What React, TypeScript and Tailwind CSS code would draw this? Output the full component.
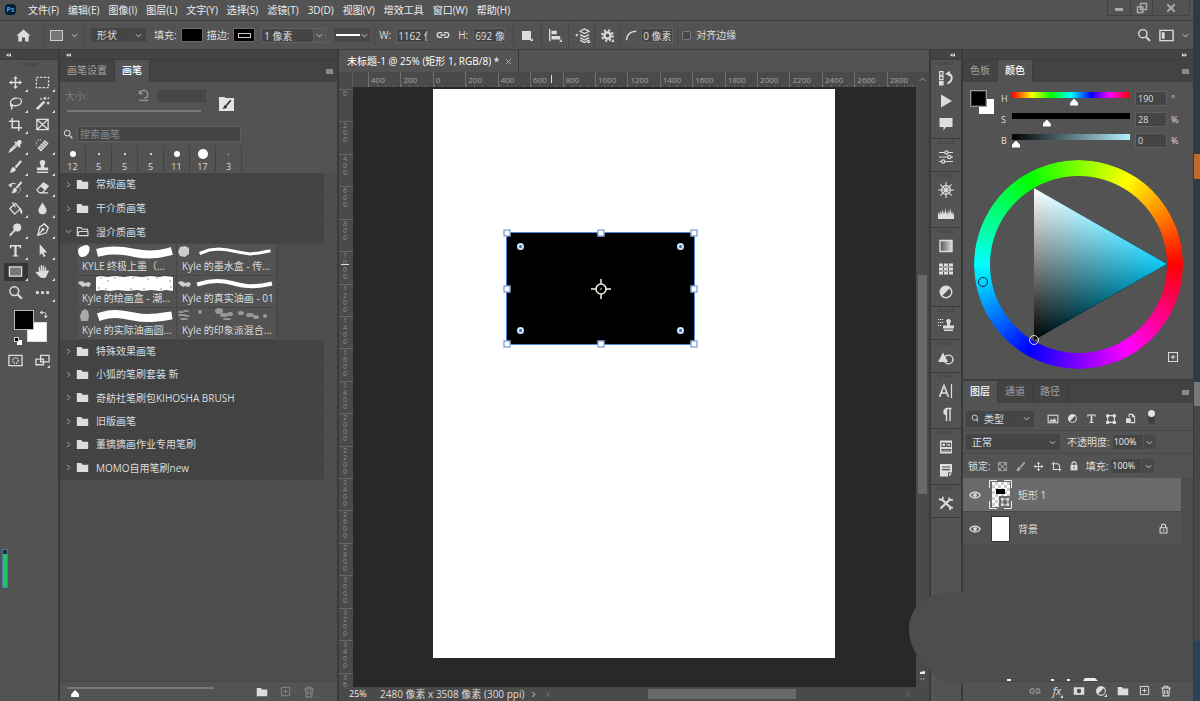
import { useState } from "react"
import type { ReactNode } from "react"
import { clsx } from "clsx"

type IconProps = { size?: number; className?: string; children: ReactNode }

function Icon({ size = 16, className, children }: IconProps) {
  return (
    <svg
      width={size}
      height={size}
      viewBox="0 0 16 16"
      fill="none"
      stroke="currentColor"
      strokeWidth="1.4"
      className={clsx("block shrink-0", className)}
      aria-hidden
    >
      {children}
    </svg>
  )
}

const fill = { fill: "currentColor", stroke: "none" }

const ICONS = {
  move: (
    <>
      <path d="M8 3v10M3 8h10" />
      <path {...fill} d="M8 1l2.5 3h-5zM8 15l2.5-3h-5zM1 8l3-2.5v5zM15 8l-3-2.5v5z" />
    </>
  ),
  marquee: <path strokeDasharray="2.5 1.5" d="M1.5 2.5h13v11h-13z" />,
  lasso: (
    <>
      <ellipse cx="8.5" cy="6.3" rx="6" ry="4" transform="rotate(-12 8.5 6.3)" />
      <path d="M4 8.5c-2 .8-1.5 2.8.4 2.4 1.2-.4.6-2-.6-1.7M4 11c.8 1.6.4 2.6-.8 3.4" />
    </>
  ),
  wand: (
    <>
      <path strokeWidth="2.8" d="M2 14l8-8" />
      <path strokeWidth="1.4" d="M10.5 1v3M9 2.500h3M14 6v3M12.500 7.500h3M5.6 2.3l1.600 1.600M15 1.500l-1.500 1.500" />
    </>
  ),
  crop: <path strokeWidth="1.6" d="M4.5 1v10.5H15M1 4.5h10.5V15" />,
  frame: <path d="M2 2.5h12v11H2zM2 2.5l12 11M14 2.5l-12 11" />,
  eyedropper: (
    <>
      <path {...fill} d="M10 3.5c1.5-3 6-1 4.3 2L12.5 8l1 1-1.3 1.3L6.7 4.8 8 3.5l1 1z" />
      <path d="M8.5 6.5l-5.8 6-1 2 2-1 6-5.6" />
    </>
  ),
  heal: (
    <>
      <path strokeWidth="5.4" d="M4.5 12.5l8-8.5" />
      <path stroke="#535353" strokeWidth="1" d="M6 7.5l3 3M7.8 5.6l3 3M4.4 9.2l3 3M9.5 3.8l3 3" />
      <path strokeDasharray="1.2 1" strokeWidth="1" d="M6.5 2.2C3 1 .5 4 1.8 8" />
    </>
  ),
  brush: (
    <>
      <path strokeWidth="2.4" d="M14 2L8 9" />
      <path {...fill} d="M6 8.500l2.200 2c.3 3-2.700 4.500-6.700 4 1.800-1 1.200-2 2-4 .6-1.200 1.500-1.800 2.500-2z" />
    </>
  ),
  stamp: (
    <>
      <path {...fill} d="M8 1a2.900 2.900 0 012.500 4.500C9.600 7 9.600 8 10 9h4v3H2V9h4c.4-1 .4-2-.5-3.500A2.900 2.900 0 018 1z" />
      <path strokeWidth="1.500" d="M2 14.200h12" />
    </>
  ),
  history: (
    <>
      <path strokeWidth="2.2" d="M14.500 2L9 8.500" />
      <path {...fill} d="M7.500 8l2 2c.2 3-2.500 4.500-6 4 1.600-1 1-1.800 1.700-3.700.5-1 1.300-2.100 2.300-2.300z" />
      <path {...fill} d="M0 5.500L4 3v5z" />
      <path strokeWidth="1.200" d="M3 5c2-2 4-1.500 5-.5" />
      <path strokeDasharray="1.500 1" strokeWidth="1" d="M13 8c1 2 0 4-2 5.500" />
    </>
  ),
  eraser: (
    <>
      <path d="M2 10.500L9 3l5 3.500-6 7H4.500z" />
      <path {...fill} d="M5.500 7l5.200 3.700L14 6.500 9 3z" />
      <path d="M6 13.700h8" />
    </>
  ),
  bucket: (
    <>
      <path d="M2 8l6-5.500 5 6-6 5.500zM8 6.500L4.500 1.500" />
      <path {...fill} d="M12.500 7c2 1.500 3.500 4 2.500 6.500-2 .5-2.500-2-2.500-6.500z" />
    </>
  ),
  drop: <path {...fill} d="M8 1.500c2 3.500 4.300 5.500 4.300 8.300a4.300 4.300 0 01-8.600 0C3.700 7 6 5 8 1.500z" />,
  dodge: (
    <>
      <circle {...fill} cx="9.800" cy="5.800" r="4.300" />
      <path strokeWidth="2" d="M7 9l-5 5.500" />
    </>
  ),
  pen: (
    <>
      <path d="M10 2l4 4-2 5.500L3 14.200 5 5.500z" />
      <path d="M3 14l5-5.500M9.500 1.500l5 5" />
      <circle {...fill} cx="8.500" cy="8" r="1.500" />
    </>
  ),
  type: <path {...fill} d="M2 2h12v3.500h-1.200c-.2-1.300-.7-1.700-2-1.700H9.200v8.400c0 .8.4 1 1.800 1.100V14.500H5v-1.200c1.400-.1 1.800-.3 1.800-1.100V3.800H5.200c-1.300 0-1.800.4-2 1.700H2z" />,
  arrow: <path {...fill} d="M5 1l8 9H9.300l2 4.200-2 .8-1.800-4.200L5 13z" />,
  rect: <path d="M1.500 3h13v10h-13z" fill="#777" />,
  hand: <path {...fill} d="M4 8.500V3.600c0-1 1.500-1 1.500 0V7h.6V1.900c0-1 1.600-1 1.600 0V7h.6V2.400c0-1 1.600-1 1.600 0v5h.6V4.200c0-1 1.500-1 1.500 0v3.300l1.700-.8c.9-.3 1.300.6.8 1.200L12 13.500c-.7 1.200-1.800 1.500-3.500 1.500S5.300 14 4.500 13L1 9.700c-.6-.8.4-1.700 1.200-1.200z" />,
  zoom: (
    <>
      <circle cx="6.700" cy="6.500" r="4.700" strokeWidth="1.600" />
      <path strokeWidth="2.200" d="M10.300 10.200l4.500 4.500" />
    </>
  ),
  dots: <path {...fill} d="M1 6.600h3v3H1zM6.500 6.600h3v3h-3zM12 6.600h3v3h-3z" />,
  play: <path {...fill} d="M3 1.500l11 6.500-11 6.500z" />,
  actions: (
    <>
      <path strokeWidth="1.200" d="M1.600 1.600h3.400v3.400H1.600zM1.600 6.300h3.400v3.400H1.600z" />
      <path {...fill} d="M1 11h4.600v4.400H1zM7 3.800L12 1v5.500z" />
      <path strokeWidth="2" d="M10 3.800c5 1 5 7.200-.5 9.700" />
    </>
  ),
  comment: <path {...fill} d="M1.500 2h13v9H8l-2.500 3.500V11h-4z" />,
  sliders: (
    <>
      <path strokeWidth="1.200" d="M1 3.500h6M10 3.500h5M1 8h9M13 8h2M1 12.500h2.500M7 12.500h8" />
      <circle cx="8.500" cy="3.500" r="1.600" strokeWidth="1.200" />
      <circle cx="11.300" cy="8" r="1.600" strokeWidth="1.200" />
      <circle cx="5.200" cy="12.500" r="1.600" strokeWidth="1.200" />
    </>
  ),
  helm: (
    <>
      <circle cx="8" cy="8" r="4.400" />
      <path strokeWidth="1.100" d="M8 0v16M0 8h16M2.300 2.300l11.400 11.400M13.700 2.300L2.300 13.700" />
      <circle {...fill} cx="8" cy="8" r="1.800" />
    </>
  ),
  histogram: <path {...fill} d="M0 14V9l1-2 .5 3L3 5.500l.5 4.500L4.500 4l.7 5L6 6l.8 3L7.500 2.500 8.300 9l.9-3 .7 4L11 4l.7 5.500L12.500 3l.9 6 .8-3 .5 4L16 7.500V14z" />,
  gradient: (
    <>
      <defs>
        <linearGradient id="gradient-icon">
          <stop stopColor="#555" />
          <stop offset="1" stopColor="#ddd" />
        </linearGradient>
      </defs>
      <path fill="url(#gradient-icon)" d="M2 2.500h12v11H2z" />
    </>
  ),
  pattern: (
    <>
      <path {...fill} d="M1 2.500h14v11H1z" />
      <path stroke="#535353" strokeWidth="1" d="M5.500 2v12M10.500 2v12M1 6h14M1 10h14" />
      <path strokeWidth="1" d="M4.500 6h2M9.500 6h2M4.500 10h2M9.500 10h2" />
    </>
  ),
  half: (
    <>
      <circle cx="8" cy="8" r="5.800" />
      <path {...fill} d="M3.800 12.200A5.900 5.900 0 0112.200 3.800z" />
    </>
  ),
  cloneSource: (
    <>
      <path {...fill} d="M10.500 2a2.300 2.300 0 011.800 3.800c-.5 1-.5 2-.3 2.700h4v3H5v-3h4c.2-.7.200-1.700-.3-2.700A2.300 2.300 0 0110.500 2zM6 12.500h9V14H6z" />
      <path strokeWidth="1.200" strokeDasharray="1.200 .8" d="M0 2.500h5.500M0 5.500h5.500M0 8.500h3.500" />
    </>
  ),
  shapes: (
    <>
      <circle cx="10.500" cy="9.500" r="4.400" />
      <path {...fill} d="M5 2.500l5 9.500H0z" />
    </>
  ),
  character: (
    <>
      <path d="M1.500 14L6 2.500 10.500 14M3 10h6" strokeWidth="1.600" />
      <path d="M13.500 1v14" strokeWidth="1.200" />
    </>
  ),
  paragraph: (
    <>
      <path {...fill} d="M8.500 2v7.500a3.800 3.800 0 010-7.500z" />
      <path strokeWidth="1.400" d="M8.500 2.500h5M8.500 2v13M12 2v13" />
    </>
  ),
  library: (
    <>
      <path {...fill} d="M2 1.500h12v13H2z" />
      <path stroke="#535353" strokeWidth="1.200" d="M4 4h3.500v3.500H4zM9 4.300h3.500v3H9zM4 10.500h8.500v1.500H4z" />
    </>
  ),
  note: (
    <>
      <path {...fill} d="M2 2h12v8.500h-4v4H2zM11 11.500h3l-3 3z" />
      <path stroke="#535353" strokeWidth="1.200" d="M4 5h8M4 7.600h8" />
    </>
  ),
  tools: (
    <>
      <path strokeWidth="2.200" d="M4 4.500l8.500 8M2.500 13.500L12 4.500" />
      <path strokeWidth="1.800" d="M1 3.500c1.500 2 4 1.800 4-1.700M14.800 12.800c-2-.8-3.300.3-2.700 2.200M11 2.500c.2 2.300 1.500 3 4 2" />
    </>
  ),
  folder: <path {...fill} d="M1 2.500h5.500l1.500 2h7v9H1z" />,
  openFolder: (
    <>
      <path d="M1.700 12.800V3.200h4.500l1.500 2h6.500v2" />
      <path d="M1.700 13l2-5h11v5z" />
    </>
  ),
  plus: <path strokeWidth="1.400" d="M2 2h12v12H2zM8 5v6M5 8h6" />,
  trash: <path strokeWidth="1.400" d="M1.500 4h13M3.500 4l.7 10.500h7.600L12.500 4M5.500 4V1.700h5V4M6.300 6.500v5.500M9.700 6.500v5.500" />,
  link: <path strokeWidth="1.500" d="M7 10.800H4.200a2.800 2.800 0 010-5.600H7M9 5.200h2.800a2.800 2.800 0 010 5.600H9M5 8h6" />,
  mask: (
    <>
      <path {...fill} d="M1 3h14v10H1z" />
      <circle cx="8" cy="8" r="3" fill="#535353" stroke="none" />
    </>
  ),
  image: (
    <>
      <path d="M1.500 3h13v10h-13z" />
      <path {...fill} d="M3 11.500l2.500-4L7.500 10 10 6.500l3 5z" />
    </>
  ),
  shapeBox: (
    <>
      <path d="M3.500 3.500h9v9h-9z" />
      <path {...fill} d="M1.500 1.500h4v4h-4zM10.500 1.500h4v4h-4zM1.500 10.500h4v4h-4zM10.500 10.500h4v4h-4z" />
    </>
  ),
  smartObject: (
    <>
      <path strokeWidth="1.500" d="M6 6V2h5l3 3v9H8" />
      <path {...fill} d="M1.500 7.500h7v7h-7zM10 1.500L14.500 6H10z" />
    </>
  ),
  checker: (
    <>
      <path d="M2 2h12v12H2z" />
      <path {...fill} d="M2 2h4v4H2zM10 2h4v4h-4zM6 6h4v4H6zM2 10h4v4H2zM10 10h4v4h-4z" />
    </>
  ),
  artboard: <path strokeWidth="1.500" d="M3.500 1v11.500H15M1 4h8.500M12.500 15V6.500L9.500 3.500" />,
  lock: (
    <>
      <path {...fill} d="M2.500 6.500h11V15h-11z" />
      <path strokeWidth="1.800" d="M4.800 7V4.500a3.200 3.200 0 016.400 0V7" />
      <path stroke="#535353" strokeWidth="1.600" d="M8 9v3.500" />
    </>
  ),
  lockOutline: <path strokeWidth="1.500" d="M3 7h10v7.500H3zM5 7V4.500a3 3 0 016 0V7M8 9.500v2.500" />,
  eye: (
    <>
      <path strokeWidth="1.700" d="M1 8c3.500-5.300 10.500-5.300 14 0-3.500 5.300-10.500 5.300-14 0z" />
      <circle {...fill} cx="8" cy="8" r="2.500" />
    </>
  ),
  gear: (
    <>
      <circle cx="8" cy="8" r="3.800" strokeWidth="2.800" />
      <path strokeWidth="2.600" strokeDasharray="2.600 2.505" d="M14.500 8a6.500 6.500 0 11-13 0 6.500 6.500 0 0113 0" />
    </>
  ),
  align: (
    <>
      <path strokeWidth="1.500" d="M2 1v14" />
      <path {...fill} d="M4 3h6v4H4zM4 9h10v4H4z" />
    </>
  ),
  arrange: (
    <>
      <path strokeWidth="1.400" d="M10 1l5 2.500L10 6 5.500 3.500zM5.500 7l4.500 2.500L15 7M5.500 10.300l4.500 2.500 5-2.500M5.500 13l4.500 2.500 5-2.500" />
      <path strokeWidth="1.200" d="M.500 7.500h3M2 6v3" />
    </>
  ),
  home: <path {...fill} d="M8 1.500l7.500 6.800h-2V14.500H9.700V10H6.300v4.500H2.500V8.300h-2z" />,
  reset: <path strokeWidth="1.600" d="M3.500 5.500A5 5 0 1111 11H9M3 1.800v4h4M3 14h11" />,
  swap: (
    <>
      <path strokeWidth="1.600" d="M4.500 4.500h5a2.500 2.500 0 012.500 2.500v4" />
      <path {...fill} d="M1 4.500L6 1v7zM12 15l-3.500-5h7z" />
    </>
  ),
}

type IconName = keyof typeof ICONS

function Chevron({ className }: { className?: string }) {
  return (
    <svg viewBox="0 0 8 8" className={clsx("block h-[7px] w-[7px] shrink-0", className)} fill="none" stroke="currentColor" aria-hidden>
      <path d="M1 2.500L4 5.500 7 2.500" />
    </svg>
  )
}

// small corner mark on buttons that hold a fly-out
function Corner() {
  return (
    <svg viewBox="0 0 4 4" className="absolute right-0 bottom-0 h-[3px] w-[3px]" aria-hidden>
      <path d="M4 0v4H0z" fill="#ddd" />
    </svg>
  )
}

function IconButton({ name, label, size = 14, corner, className }: { name: IconName; label: string; size?: number; corner?: boolean; className?: string }) {
  return (
    <button type="button" aria-label={label} className={clsx("relative flex shrink-0 items-center justify-center", className)}>
      <Icon size={size}>{ICONS[name]}</Icon>
      {corner && <Corner />}
    </button>
  )
}

const MENUS = ["文件(F)", "编辑(E)", "图像(I)", "图层(L)", "文字(Y)", "选择(S)", "滤镜(T)", "3D(D)", "视图(V)", "增效工具", "窗口(W)", "帮助(H)"]

function MenuBar() {
  return (
    <header className="flex h-[21px] shrink-0 items-start border-b border-[#3c3c3c]">
      <span className="mt-1 ml-[5px] flex h-[11px] w-[11px] items-center justify-center rounded-sm bg-[#001e36] text-[7px] font-bold text-[#31a8ff]">Ps</span>
      <nav className="ml-3 flex h-5 items-center gap-[9px]">
        {MENUS.map((item) => (
          <button key={item} type="button" className="whitespace-nowrap text-[#eee]">
            {item}
          </button>
        ))}
      </nav>
      <div className="mr-[3px] ml-auto flex h-4 border border-t-0 border-[#434343] text-[#aaa]">
        <button type="button" aria-label="最小化" className="flex w-[23px] items-center justify-center border-r border-[#434343]">
          <span className="mt-1 h-[3px] w-2 bg-[#aaa]" />
        </button>
        <button type="button" aria-label="还原" className="flex w-[22px] items-center justify-center border-r border-[#434343]">
          <Icon size={12}>
            <path strokeWidth="2" d="M6 2h8v8H6zM2 6.500h7V14H2z" />
          </Icon>
        </button>
        <button type="button" aria-label="关闭" className="flex w-9 items-center justify-center">
          <Icon size={10}>
            <path strokeWidth="3" d="M2 2l12 12M14 2L2 14" />
          </Icon>
        </button>
      </div>
    </header>
  )
}

function Divider({ className }: { className?: string }) {
  return <span className={clsx("h-6 w-px shrink-0 bg-[#474747]", className)} />
}

const field = "h-[15px] border border-[#606060] bg-[#454545] text-[#ddd] outline-none"

function Dropdown({ label, value, className }: { label: string; value: string; className?: string }) {
  return (
    <span className={clsx("relative flex items-center", className)}>
      <select aria-label={label} className="h-full w-full appearance-none bg-[#454545] px-1.5 text-[#ddd] outline-none">
        <option>{value}</option>
      </select>
      <Chevron className="pointer-events-none absolute right-1" />
    </span>
  )
}

function OptionsBar() {
  return (
    <div className="flex h-[29px] shrink-0 items-center border-b border-[#3c3c3c]">
      <IconButton name="home" label="主页" size={15} className="ml-4" />
      <Divider className="ml-3" />
      <button type="button" aria-label="矩形工具" className="ml-1.5 flex items-center gap-2">
        <span className="h-[11px] w-[13px] border border-[#ccc] bg-[#777]" />
        <Chevron />
      </button>
      <Divider className="ml-1.5" />
      <Dropdown label="工具模式" value="形状" className="ml-1.5 h-[14px] w-[55px]" />
      <span className="ml-2">填充:</span>
      <button type="button" aria-label="填充颜色" className="ml-1 h-[14px] w-[22px] border border-[#6a6a6a] bg-black" />
      <span className="ml-1">描边:</span>
      <button type="button" aria-label="描边颜色" className="ml-1 flex h-[14px] w-[22px] items-center justify-center border border-[#6a6a6a] bg-black">
        <span className="h-[5px] w-[13px] border border-[#ccc]" />
      </button>
      <input aria-label="描边宽度" defaultValue="1 像素" className={clsx(field, "ml-1.5 w-[53px] px-0.5")} />
      <button type="button" aria-label="描边宽度选项" className="flex h-[15px] w-3 items-center justify-center border border-l-0 border-[#606060]">
        <Chevron />
      </button>
      <button type="button" aria-label="描边样式" className="ml-2 flex h-[14px] w-9 items-center justify-between bg-[#484848] px-0.5">
        <span className="h-0.5 w-6 bg-white" />
        <Chevron />
      </button>
      <Divider className="ml-1" />
      <label className="ml-1 flex items-center gap-[5px]">
        W:
        <input defaultValue="1162 像素" className={clsx(field, "w-8 pl-px")} />
      </label>
      <IconButton name="link" label="链接形状的宽度和高度" size={14} className="ml-2" />
      <label className="ml-2 flex items-center gap-[5px]">
        H:
        <input defaultValue="692 像素" className={clsx(field, "w-8 pl-px")} />
      </label>
      <Divider className="ml-2" />
      <button type="button" aria-label="路径操作" className="relative ml-2 flex h-3 w-[11px] items-center">
        <span className="h-[9px] w-[9px] bg-[#ddd]" />
        <Corner />
      </button>
      <Divider className="ml-2" />
      <IconButton name="align" label="路径对齐方式" corner className="ml-1.5" />
      <Divider className="ml-1.5" />
      <IconButton name="arrange" label="路径排列方式" size={15} corner className="ml-1.5" />
      <Divider className="ml-1" />
      <IconButton name="gear" label="路径选项" size={13} corner className="ml-1.5" />
      <Divider className="ml-1.5" />
      <label className="ml-1 flex items-center gap-1">
        <Icon size={12}>
          <path strokeWidth="2" d="M2 15C2 8 7 3 15 3" />
        </Icon>
        <input aria-label="圆角半径" defaultValue="0 像素" className={clsx(field, "w-8 pl-px")} />
      </label>
      <Divider className="ml-1" />
      <label className="ml-1 flex items-center gap-[5px]">
        <input type="checkbox" className="h-[9px] w-[9px] appearance-none rounded-xs border border-[#7a7a7a] bg-[#464646]" />
        对齐边缘
      </label>
      <div className="mr-1 ml-auto flex items-center gap-2">
        <IconButton name="zoom" label="搜索" size={14} />
        <button type="button" aria-label="工作区" className="flex items-center gap-2">
          <Icon size={15}>
            <path strokeWidth="1.500" d="M1 2.500h14v11H1z" />
            <path {...fill} d="M3 4.500h3v7H3z" />
          </Icon>
          <Chevron />
        </button>
      </div>
    </div>
  )
}

function Collapse({ right, className }: { right?: boolean; className?: string }) {
  return (
    <button type="button" aria-label="折叠面板" className={clsx("flex h-[9px] w-full shrink-0 items-center bg-[#444] px-1.5", className)}>
      <svg viewBox="0 0 8 6" className={clsx("h-[4px] w-[5px]", right && "rotate-180")} fill="#ddd" aria-hidden>
        <path d="M4 0v6L0 3zM8 0v6L4 3z" />
      </svg>
    </button>
  )
}

const TOOLS: { name: IconName; label: string; corner?: boolean }[] = [
  { name: "move", label: "移动工具", corner: true },
  { name: "marquee", label: "矩形选框工具", corner: true },
  { name: "lasso", label: "套索工具", corner: true },
  { name: "wand", label: "魔棒工具", corner: true },
  { name: "crop", label: "裁剪工具", corner: true },
  { name: "frame", label: "图框工具" },
  { name: "eyedropper", label: "吸管工具", corner: true },
  { name: "heal", label: "修复画笔工具", corner: true },
  { name: "brush", label: "画笔工具", corner: true },
  { name: "stamp", label: "仿制图章工具", corner: true },
  { name: "history", label: "历史记录画笔工具", corner: true },
  { name: "eraser", label: "橡皮擦工具", corner: true },
  { name: "bucket", label: "油漆桶工具", corner: true },
  { name: "drop", label: "模糊工具", corner: true },
  { name: "dodge", label: "减淡工具", corner: true },
  { name: "pen", label: "钢笔工具", corner: true },
  { name: "type", label: "文字工具", corner: true },
  { name: "arrow", label: "路径选择工具", corner: true },
  { name: "rect", label: "矩形工具", corner: true },
  { name: "hand", label: "抓手工具", corner: true },
  { name: "zoom", label: "缩放工具" },
  { name: "dots", label: "编辑工具栏", corner: true },
]

function Gripper({ className }: { className?: string }) {
  return (
    <span className={clsx("flex shrink-0 items-center justify-center", className)}>
      <span className="h-[3px] w-4 bg-[repeating-linear-gradient(90deg,#444_0_1px,transparent_1px_2px)]" />
    </span>
  )
}

function Toolbar() {
  const [tool, setTool] = useState("rect")
  return (
    <aside className="relative flex w-[58px] shrink-0 flex-col">
      <Collapse />
      <div className="flex-1 border-t border-[#3c3c3c] pl-0.5">
        <Gripper className="h-[9px]" />
        <div className="mt-[3px] grid w-[54px] grid-cols-2">
          {TOOLS.map(({ name, label, corner }) => (
            <button
              key={name}
              type="button"
              aria-label={label}
              onClick={() => setTool(name)}
              className="flex h-[21px] items-center justify-center"
            >
              <span className={clsx("relative flex h-[18px] w-6 items-center justify-center pr-px", tool === name && "bg-[#363636]")}>
                <Icon size={15}>{ICONS[name]}</Icon>
                {corner && <Corner />}
              </span>
            </button>
          ))}
        </div>
        <div className="relative mt-[5px] ml-[11px] h-9 w-9">
          <button type="button" aria-label="背景色" className="absolute top-[14px] left-[14px] h-5 w-5 border border-[#ddd] bg-white" />
          <button type="button" aria-label="前景色" className="absolute top-0.5 left-px h-5 w-5 border border-[#bbb] bg-black" />
          <button type="button" aria-label="切换颜色" className="absolute top-0.5 left-[26px]">
            <Icon size={9}>{ICONS.swap}</Icon>
          </button>
          <button type="button" aria-label="默认颜色" className="absolute top-[29px] left-px h-2 w-2">
            <span className="absolute right-0 bottom-0 h-[5px] w-[5px] bg-white" />
            <span className="absolute top-0 left-0 h-[5px] w-[5px] border border-[#ccc] bg-black" />
          </button>
        </div>
        <div className="mt-[9px] grid w-[54px] grid-cols-2 justify-items-center">
          <button type="button" aria-label="快速蒙版">
            <Icon size={15}>
              <path d="M1 2.500h14v11H1z" />
              <circle cx="8" cy="8" r="3" strokeDasharray="1.500 1" />
            </Icon>
          </button>
          <button type="button" aria-label="屏幕模式" className="relative">
            <Icon size={15}>
              <path fill="#535353" d="M1 6.500h8v6H1zM6 2.500h9v7H6z" />
            </Icon>
            <Corner />
          </button>
        </div>
      </div>
      <div className="absolute top-[499px] left-0.5 h-[39px] w-1.5 border border-[#4c7ba3] bg-[#1c2f48] pt-1">
        <div className="h-full bg-[#23c268]" />
      </div>
    </aside>
  )
}

function Tabs({ tabs, active }: { tabs: string[]; active: string }) {
  return (
    <div className="flex h-[22px] shrink-0 bg-[#434343]" role="tablist">
      {tabs.map((tab) => (
        <button
          key={tab}
          type="button"
          role="tab"
          aria-selected={tab === active}
          className={clsx(
            "border-r border-[#3e3e3e] px-[7px] pb-0.5 whitespace-nowrap",
            tab === active ? "bg-[#535353] font-medium text-white" : "text-[#a0a0a0]",
          )}
        >
          {tab}
        </button>
      ))}
      <button type="button" aria-label="面板菜单" className="mr-1 ml-auto flex items-center">
        <span className="h-[5px] w-[7px] bg-[#8a8a8a]" />
      </button>
    </div>
  )
}

const thumb =
  "[&::-webkit-slider-thumb]:h-[7px] [&::-webkit-slider-thumb]:w-2 [&::-webkit-slider-thumb]:appearance-none [&::-webkit-slider-thumb]:bg-white [&::-webkit-slider-thumb]:[clip-path:polygon(50%_0,100%_60%,100%_100%,0_100%,0_60%)]"

const PRESETS = [
  { size: 12, dot: 6 },
  { size: 5, dot: 2 },
  { size: 5, dot: 2 },
  { size: 5, dot: 2 },
  { size: 11, dot: 6 },
  { size: 17, dot: 10 },
  { size: 3, dot: 1 },
]

const strokeProps = { fill: "none", stroke: "#fff", strokeLinecap: "square" as const }
const blot = (x: number, y: number, rx: number, ry: number) => <ellipse key={`${x}-${y}`} cx={x} cy={y} rx={rx} ry={ry} />

const BRUSHES: { name: string; art: ReactNode }[] = [
  {
    name: "KYLE 终极上墨（...",
    art: (
      <>
        <path fill="#fff" d="M1 6c1-3 4-4 8-5 4 0 4 4 3 7s-4 5-7 5-4-4-4-7z" />
        <path {...strokeProps} strokeWidth="8" d="M24 8c12-3 24-1 34 1s22 2 33-1" />
      </>
    ),
  },
  {
    name: "Kyle 的墨水盒 - 传...",
    art: (
      <>
        <path fill="#ccc" d="M3 3l5-1 4 2v6l-4 3-5-1-2-4z" />
        <path {...strokeProps} strokeWidth="3" d="M24 9l8-3 10-1 9 1 10 2 12 2 9-1 10-2" />
      </>
    ),
  },
  {
    name: "Kyle 的绘画盒 - 潮...",
    art: (
      <>
        <path fill="#ccc" d="M1 6l4-1 3 2 4-1 2 2-2 3-4-1-2 1-4-3z" />
        <path fill="#fff" d="M19 1l5-1 6 1 8-1 9 1 7-1 11 1 9-1 8 1 6-1 8 1v14l-7-1-6 1-9-1-8 1-6-1-9 1-10-1-8 1-8-1-6 1z" />
        <g fill="#bbb">
          {[[24, 2], [31, 5], [38, 2], [56, 2], [71, 3], [80, 2], [93, 5], [22, 12], [29, 13], [54, 13], [67, 13], [84, 13], [94, 11]].map(([x, y]) => blot(x, y, 1, 1))}
        </g>
      </>
    ),
  },
  {
    name: "Kyle 的真实油画 - 01",
    art: (
      <>
        <path fill="#ccc" d="M1 6l4-1 3 2 4-1 2 2-2 3-4-1-2 1-4-3z" />
        <path {...strokeProps} strokeWidth="4" d="M22 8c12-4 22-4 33-1s20 5 38 1" />
      </>
    ),
  },
  {
    name: "Kyle 的实际油画圆...",
    art: (
      <>
        <path fill="#aaa" d="M5 3l3-2 3 2 1 5-1 5H4L3 8z" />
        <path {...strokeProps} strokeWidth="8" d="M25 8c12-4 24-1 34 1s20 1 32-1" />
      </>
    ),
  },
  {
    name: "Kyle 的印象派混合...",
    art: (
      <g fill="#999">
        {[[4, 4, 3, 1], [9, 3, 3, 1], [5, 7, 4, 1], [10, 8, 3, 1], [7, 11, 4, 1], [23, 4, 2, 2], [42, 3, 4, 3], [47, 7, 4, 2], [53, 6, 3, 2], [50, 11, 4, 1], [64, 5, 3, 2], [73, 7, 4, 2], [79, 9, 3, 2], [88, 8, 2, 2]].map(
          ([x, y, rx, ry]) => blot(x, y, rx, ry),
        )}
      </g>
    ),
  },
]

function FolderRow({ name, open }: { name: string; open?: boolean }) {
  return (
    <button type="button" aria-expanded={!!open} className="flex w-full flex-1 items-center border-b border-[#484848] bg-[#434343] pl-[5px] text-left">
      <Chevron className={clsx("text-[#bbb]", !open && "-rotate-90")} />
      <Icon size={13} className="mr-[7px] ml-1">
        {open ? ICONS.openFolder : ICONS.folder}
      </Icon>
      {name}
    </button>
  )
}

function BrushPanel() {
  return (
    <aside className="flex w-[277px] shrink-0 flex-col">
      <Collapse />
      <div className="flex flex-1 flex-col border-t border-[#3c3c3c]">
        <Tabs tabs={["画笔设置", "画笔"]} active="画笔" />
        <div className="flex h-[42px] pt-[5px] pl-[5px]">
          <div>
            <div className="flex h-[17px] items-center text-[#808080]">
              <label htmlFor="brush-size" className="w-[70px]">
                大小:
              </label>
              <IconButton name="reset" label="复位大小" size={13} className="w-4 text-[#999]" />
              <input id="brush-size" className="ml-1.5 h-[14px] w-[50px] border border-[#4f4f4f] bg-[#464646]" />
            </div>
            <div className="mt-1.5 ml-0.5 h-0.5 w-[134px] bg-[#777]" />
          </div>
          <button type="button" aria-label="画笔文件夹" className="mt-[9px] ml-3 flex h-[15px] w-[15px] items-center justify-center">
            <svg viewBox="0 0 16 16" className="h-[15px] w-[15px]" aria-hidden>
              <path fill="#e4e4e4" d="M0 1h6l1 1h9v14H0z" />
              <path fill="none" stroke="#333" strokeWidth="1.800" d="M12.500 4.500L8 10" />
              <path fill="#333" d="M6.700 9.200l2 1.800c0 2-2 3-5 2.500 1.500-.8 1-2.800 3-4.300z" />
            </svg>
          </button>
        </div>
        <div className="flex h-[19px] items-center pl-[3px]">
          <Icon size={10}>{ICONS.zoom}</Icon>
          <input type="search" aria-label="搜索画笔" placeholder="搜索画笔" className="ml-1 h-4 w-[164px] border border-[#606060] bg-[#454545] px-0.5 text-[#ddd] outline-none placeholder:text-[#8a8a8a]" />
        </div>
        <div className="flex h-[30px] items-end pb-px">
          {PRESETS.map(({ size, dot }, i) => (
            <button key={i} type="button" className="flex w-[26px] flex-col items-center border-r border-[#434343] text-[9px] leading-[10px]">
              <span className="flex h-4 items-center">
                <span className="block rounded-full bg-white" style={{ width: dot, height: dot }} />
              </span>
              {size}
            </button>
          ))}
        </div>
        <div className="min-h-0 flex-1 overflow-hidden bg-[#4d4d4d] pr-[13px]">
          <div className="flex h-[71px] flex-col">
            <FolderRow name="常规画笔" />
            <FolderRow name="干介质画笔" />
            <FolderRow name="湿介质画笔" open />
          </div>
          <div className="grid h-24 w-[217px] grid-cols-2 pl-[17px]">
            {BRUSHES.map(({ name, art }) => (
              <button key={name} type="button" className="flex h-8 flex-col border-r border-b border-[#464646] bg-[#535353] text-left">
                <svg viewBox="0 0 99 15" className="block h-[15px] w-full" aria-hidden>
                  {art}
                </svg>
                <span className="overflow-hidden pl-[5px] leading-[14px] whitespace-nowrap">{name}</span>
              </button>
            ))}
          </div>
          <div className="flex h-[140px] flex-col">
            <FolderRow name="特殊效果画笔" />
            <FolderRow name="小狐的笔刷套装 新" />
            <FolderRow name="奇舫社笔刷包KIHOSHA BRUSH" />
            <FolderRow name="旧版画笔" />
            <FolderRow name="董摛摛画作业专用笔刷" />
            <FolderRow name="MOMO自用笔刷new" />
          </div>
        </div>
        <div className="flex h-5 shrink-0 items-center border-t border-[#484848] pl-[7px]">
          <input
            type="range"
            aria-label="预览大小"
            defaultValue={3}
            className={clsx(
              "h-3 w-[147px] appearance-none self-start bg-transparent [&::-webkit-slider-runnable-track]:h-0.5 [&::-webkit-slider-runnable-track]:bg-[#777] [&::-webkit-slider-thumb]:mt-[3px]",
              thumb,
            )}
          />
          <IconButton name="folder" label="新建组" size={12} className="ml-auto" />
          <IconButton name="plus" label="新建画笔" size={11} className="ml-3 text-[#888]" />
          <IconButton name="trash" label="删除画笔" size={12} className="mr-[22px] ml-3 text-[#888]" />
        </div>
      </div>
    </aside>
  )
}

// 25% view: one ruler step of 200 image pixels on screen
const STEP = 32.43
const H_MARKS = [400, 200, ...Array.from({ length: 15 }, (_, i) => i * 200)]
const V_MARKS = Array.from({ length: 19 }, (_, i) => i * 200)

const handle = "absolute h-[7px] w-[7px] -translate-x-1/2 -translate-y-1/2 border border-[#5b84c9] bg-white"
const corner = "absolute h-[7px] w-[7px] rounded-full border-2 border-[#cfe6ff] bg-[#2a6fb5]"

function Artboard() {
  return (
    <div className="absolute top-0.5 left-20 h-[569px] w-[402px] bg-white">
      <div className="absolute top-[143px] left-[73px] h-[113px] w-[189px] border border-[#4f86d9] bg-black">
        <span className={clsx(handle, "top-0 left-0")} />
        <span className={clsx(handle, "top-0 left-1/2")} />
        <span className={clsx(handle, "top-0 left-full")} />
        <span className={clsx(handle, "top-1/2 left-0")} />
        <span className={clsx(handle, "top-1/2 left-full")} />
        <span className={clsx(handle, "top-full left-0")} />
        <span className={clsx(handle, "top-full left-1/2")} />
        <span className={clsx(handle, "top-full left-full")} />
        <span className={clsx(corner, "top-2.5 left-2.5")} />
        <span className={clsx(corner, "top-2.5 right-2.5")} />
        <span className={clsx(corner, "bottom-2.5 left-2.5")} />
        <span className={clsx(corner, "right-2.5 bottom-2.5")} />
        <svg viewBox="0 0 20 20" className="absolute top-[46px] left-[84px] h-5 w-5" fill="none" stroke="#f4efe4" strokeWidth="1.500" aria-hidden>
          <circle cx="10" cy="10" r="5" />
          <path d="M10 0v5M10 15v5M0 10h5M15 10h5" />
          <circle cx="10" cy="10" r=".8" fill="#f4efe4" stroke="none" />
        </svg>
      </div>
    </div>
  )
}

function DocumentView() {
  return (
    <main className="flex min-w-0 flex-1 flex-col bg-[#424242]">
      <div className="flex h-[22px] shrink-0 items-stretch">
        <div className="flex items-center border-r border-[#3a3a3a] bg-[#535353] pr-1.5 pl-2 whitespace-nowrap text-white">
          未标题-1 @ 25% (矩形 1, RGB/8) *
          <button type="button" aria-label="关闭文档" className="ml-1.5 text-[#bbb]">
            <Icon size={7}>
              <path strokeWidth="2" d="M2 2l12 12M14 2L2 14" />
            </Icon>
          </button>
        </div>
      </div>
      <div className="flex h-[15px] shrink-0 bg-[#4a4a4a] text-[8px] text-[#a5a5a5]">
        <span className="w-[14px] shrink-0 border-r border-[#5c5c5c]" />
        <div className="relative flex min-w-0 flex-1 overflow-hidden pl-[15px]">
          {H_MARKS.map((mark, i) => (
            <span
              key={i}
              className="shrink-0 border-l border-[#6e6e6e] bg-[repeating-linear-gradient(90deg,#666_0_1px,transparent_1px_8px)] bg-[length:100%_2px] bg-bottom bg-no-repeat pt-0.5 pl-0.5 leading-3"
              style={{ width: STEP }}
            >
              {mark}
            </span>
          ))}
          <span className="absolute top-[3px] left-[198px] h-2 w-px bg-[#ddd]" />
        </div>
        <button type="button" aria-label="向上滚动" className="flex w-[13px] items-center justify-center">
          <Chevron className="rotate-180" />
        </button>
      </div>
      <div className="flex min-h-0 flex-1">
        <div className="relative w-[14px] shrink-0 overflow-hidden bg-[#4a4a4a] pt-0.5 text-[7px] leading-[7px] text-[#8e8e8e]">
          {V_MARKS.map((mark) => (
            <div key={mark} className="flex flex-col items-center border-t border-[#666] pr-0.5" style={{ height: STEP }}>
              {String(mark)
                .split("")
                .map((digit, i) => (
                  <span key={i}>{digit}</span>
                ))}
            </div>
          ))}
          <span className="absolute top-[177px] left-0.5 h-px w-2 bg-[#ddd]" />
        </div>
        <div className="relative min-w-0 flex-1 overflow-hidden bg-[#282828]">
          <Artboard />
        </div>
        <div className="w-[13px] shrink-0 bg-[#4a4a4a] px-0.5">
          <div className="mt-[188px] h-[219px] bg-[#696969]" />
        </div>
      </div>
      <div className="flex h-[14px] shrink-0 items-center bg-[#4a4a4a]">
        <span className="w-[41px] pl-2.5 text-[9px] text-[#eee]">25%</span>
        <button type="button" className="flex items-center gap-1.5 whitespace-nowrap">
          2480 像素 x 3508 像素 (300 ppi)
          <Chevron className="-rotate-90" />
        </button>
        <div className="flex flex-1 items-center pr-[18px] pl-2">
          <Chevron className="rotate-90 text-[#888]" />
          <div className="mr-[108px] ml-auto h-[10px] w-[148px] bg-[#696969]" />
          <Chevron className="-rotate-90 text-[#888]" />
        </div>
      </div>
    </main>
  )
}

const DOCK: { name: IconName; label: string }[][] = [
  [
    { name: "actions", label: "历史记录" },
    { name: "play", label: "动作" },
    { name: "comment", label: "注释" },
  ],
  [{ name: "sliders", label: "属性" }],
  [
    { name: "helm", label: "导航器" },
    { name: "histogram", label: "直方图" },
  ],
  [
    { name: "gradient", label: "渐变" },
    { name: "pattern", label: "图案" },
    { name: "half", label: "调整" },
  ],
  [{ name: "cloneSource", label: "仿制源" }],
  [{ name: "shapes", label: "形状" }],
  [
    { name: "character", label: "字符" },
    { name: "paragraph", label: "段落" },
  ],
  [
    { name: "library", label: "库" },
    { name: "note", label: "备注" },
  ],
  [{ name: "tools", label: "工具预设" }],
]

function IconDock() {
  return (
    <aside className="flex w-[30px] shrink-0 flex-col">
      <Collapse className="justify-end" />
      <div className="flex-1 border-t border-[#3c3c3c]">
        {DOCK.map((group) => (
          <div key={group[0].name} className="border-b border-[#3a3a3a] pb-[3px]">
            <Gripper className="h-1.5" />
            {group.map(({ name, label }) => (
              <IconButton key={name} name={name} label={label} size={16} className="h-[23px] w-full" />
            ))}
          </div>
        ))}
      </div>
    </aside>
  )
}

const CHANNELS = [
  {
    name: "H",
    value: 190,
    max: 360,
    unit: "°",
    track: "[&::-webkit-slider-runnable-track]:bg-[linear-gradient(90deg,#f00,#ff0_17%,#0f0_33%,#0ff_50%,#00f_67%,#f0f_83%,#f00)]",
  },
  { name: "S", value: 28, max: 100, unit: "%", track: "[&::-webkit-slider-runnable-track]:bg-[linear-gradient(#000,#000)]" },
  { name: "B", value: 0, max: 100, unit: "%", track: "[&::-webkit-slider-runnable-track]:bg-[linear-gradient(90deg,#000,#b4f0ff)]" },
]

function ColorWheel() {
  return (
    <div className="relative mt-[9px] ml-[11px] h-[209px] w-[209px] shrink-0">
      <div className="h-full w-full rounded-full bg-[conic-gradient(from_90deg,#f00,#f0f,#00f,#0ff,#0f0,#ff0,#f00)] [mask-image:radial-gradient(circle,transparent_88px,#000_89px)]" />
      <svg viewBox="0 0 209 209" className="absolute inset-0 isolate h-full w-full" aria-hidden>
        <defs>
          <linearGradient id="tint" gradientUnits="userSpaceOnUse" x1="60" y1="28" x2="126" y2="142">
            <stop stopColor="#fff" />
            <stop offset="1" stopColor="#000" />
          </linearGradient>
          <linearGradient id="hue" gradientUnits="userSpaceOnUse" x1="193" y1="104" x2="60" y2="104">
            <stop stopColor="#0dcbf5" />
            <stop offset="1" stopColor="#000" />
          </linearGradient>
        </defs>
        <path d="M60 28l133 76-133 76z" fill="url(#tint)" />
        <path d="M60 28l133 76-133 76z" fill="url(#hue)" className="mix-blend-plus-lighter" />
        <circle cx="9" cy="122" r="4.500" fill="none" stroke="#123" />
        <circle cx="60" cy="180" r="4.500" fill="none" stroke="#ddd" />
      </svg>
    </div>
  )
}

function ColorPanel() {
  return (
    <section className="flex h-[321px] shrink-0 flex-col border-b-2 border-[#3c3c3c]">
      <Tabs tabs={["色板", "颜色"]} active="颜色" />
      <div className="flex pt-1.5 pl-[7px]">
        <div className="relative mt-0.5 h-6 w-6 shrink-0">
          <button type="button" aria-label="背景色" className="absolute right-0 bottom-0 h-[15px] w-[15px] bg-white" />
          <button type="button" aria-label="前景色" className="absolute top-0 left-0 h-[17px] w-[17px] border border-[#999] bg-black ring-1 ring-[#333] ring-inset" />
        </div>
        <div className="ml-[7px] flex-1">
          {CHANNELS.map(({ name, value, max, unit, track }) => (
            <div key={name} className="flex h-[21px] items-center">
              <label htmlFor={`channel-${name}`} className="w-[11px] text-[9px]">
                {name}
              </label>
              <input
                id={`channel-${name}`}
                type="range"
                max={max}
                defaultValue={value}
                className={clsx(
                  "h-[14px] w-[118px] appearance-none bg-transparent [&::-webkit-slider-runnable-track]:h-[14px] [&::-webkit-slider-runnable-track]:bg-[length:100%_6px] [&::-webkit-slider-runnable-track]:bg-no-repeat [&::-webkit-slider-thumb]:mt-[7px]",
                  track,
                  thumb,
                )}
              />
              <input aria-label={`${name} 值`} defaultValue={value} className={clsx(field, "ml-[5px] w-8 px-0.5 text-[9px]")} />
              <span className="ml-1 text-[9px]">{unit}</span>
            </div>
          ))}
        </div>
      </div>
      <ColorWheel />
      <div className="-mt-[18px] mr-[14px] flex justify-end">
        <IconButton name="plus" label="添加到色板" size={12} />
      </div>
    </section>
  )
}

function Percent({ label }: { label: string }) {
  return (
    <div className="flex items-center">
      <label className="flex items-center gap-[3px] whitespace-nowrap">
        {label}
        <input defaultValue="100%" className="h-[14px] w-[30px] bg-[#454545] px-px text-[9px] text-[#eee] outline-none" />
      </label>
      <button type="button" aria-label={`${label} 选项`} className="ml-px flex h-[14px] w-3 items-center justify-center bg-[#484848]">
        <Chevron />
      </button>
    </div>
  )
}

function LayersPanel() {
  return (
    <section className="flex min-h-0 flex-1 flex-col">
      <Tabs tabs={["图层", "通道", "路径"]} active="图层" />
      <div className="flex h-7 shrink-0 items-center border-b border-[#484848] pt-1 pl-[3px]">
        <span className="flex h-4 w-[68px] items-center bg-[#454545] pl-[5px]">
          <Icon size={9}>{ICONS.zoom}</Icon>
          <Dropdown label="筛选类型" value="类型" className="-ml-0.5 h-4 flex-1" />
        </span>
        <div className="ml-[13px] flex items-center gap-2">
          <IconButton name="image" label="像素图层滤镜" size={12} />
          <IconButton name="half" label="调整图层滤镜" size={11} />
          <IconButton name="type" label="文字图层滤镜" size={11} />
          <IconButton name="shapeBox" label="形状图层滤镜" size={12} />
          <IconButton name="smartObject" label="智能对象滤镜" size={11} />
        </div>
        <button type="button" aria-label="打开或关闭图层滤镜" className="mb-1 ml-3 flex h-[14px] w-[7px] rounded-full bg-[#3e3e3e]">
          <span className="h-[7px] w-[7px] rounded-full bg-[#e4e4e4]" />
        </button>
      </div>
      <div className="flex h-[23px] shrink-0 items-center border-b border-[#484848] pl-[3px]">
        <Dropdown label="混合模式" value="正常" className="mr-[7px] h-4 w-[94px]" />
        <Percent label="不透明度:" />
      </div>
      <div className="flex h-6 shrink-0 items-center pl-[5px]">
        锁定:
        <div className="mr-[7px] ml-1.5 flex items-center gap-[7px]">
          <IconButton name="checker" label="锁定透明像素" size={11} className="text-[#999]" />
          <IconButton name="brush" label="锁定图像像素" size={11} className="text-[#aaa]" />
          <IconButton name="move" label="锁定位置" size={11} />
          <IconButton name="artboard" label="防止自动嵌套" size={11} />
          <IconButton name="lock" label="锁定全部" size={10} />
        </div>
        <Percent label="填充:" />
      </div>
      <ul className="min-h-0 flex-1 bg-[#4d4d4d] pr-3">
        <li className="flex h-[34px] items-center border-b border-[#484848] bg-[#6a6a6a]">
          <IconButton name="eye" label="隐藏矩形 1" size={12} className="ml-1.5" />
          <div className="relative ml-2 flex h-[29px] w-[23px] items-center justify-center">
            <svg viewBox="0 0 23 29" className="absolute inset-0 h-full w-full" fill="none" stroke="#eee" aria-hidden>
              <path d="M.5 8V.5H8M15 .5h7.500V8M22.500 21v7.500H15M8 28.500H.5V21" />
            </svg>
            <span className="relative h-[25px] w-[18px] bg-white bg-[repeating-conic-gradient(#ccc_0_25%,#fff_0_50%)] bg-[length:6px_6px]">
              <span className="absolute top-[7px] left-1 h-[5px] w-[9px] bg-black" />
              <span className="absolute -right-px -bottom-px bg-[#6a6a6a] p-px">
                <Icon size={10}>{ICONS.shapeBox}</Icon>
              </span>
            </span>
          </div>
          <span className="ml-1.5">矩形 1</span>
        </li>
        <li className="flex h-[34px] items-center border-b border-[#484848] bg-[#535353]">
          <IconButton name="eye" label="隐藏背景" size={12} className="ml-1.5" />
          <span className="ml-[10px] h-[26px] w-[19px] border border-[#333] bg-white" />
          <span className="ml-2">背景</span>
          <Icon size={11} className="mr-3 ml-auto">
            {ICONS.lockOutline}
          </Icon>
        </li>
      </ul>
      <div className="relative z-20 flex h-5 shrink-0 items-center justify-end gap-2.5 border-t border-[#484848] bg-[#535353] pr-[21px] pb-0.5">
        <IconButton name="link" label="链接图层" size={12} className="text-[#999]" />
        <button type="button" aria-label="图层样式" className="relative h-[14px] w-3 text-[11px] leading-3 italic">
          fx
          <Corner />
        </button>
        <IconButton name="mask" label="添加蒙版" size={12} />
        <IconButton name="half" label="新建调整图层" size={12} corner />
        <IconButton name="folder" label="新建组" size={12} />
        <IconButton name="plus" label="新建图层" size={11} />
        <IconButton name="trash" label="删除图层" size={12} />
      </div>
    </section>
  )
}

export default function App() {
  return (
    <div className="flex h-screen w-full overflow-hidden bg-[#2d3b47] font-['Open_Sans','Noto_Sans_CJK_SC',sans-serif] text-[10px] leading-[14px] text-[#ddd]">
      <div className="relative flex min-w-0 flex-1 flex-col border-r border-[#3a3a3a] bg-[#535353]">
        <MenuBar />
        <OptionsBar />
        <div className="flex min-h-0 flex-1 gap-x-0.5 bg-[#3a3a3a] *:bg-[#535353]">
          <Toolbar />
          <BrushPanel />
          <DocumentView />
          <IconDock />
          <aside className="flex w-[230px] shrink-0 flex-col">
            <Collapse right className="justify-end" />
            <div className="flex min-h-0 flex-1 flex-col border-t border-[#3c3c3c]">
              <ColorPanel />
              <LayersPanel />
            </div>
          </aside>
        </div>
        <svg viewBox="0 0 282 97" className="pointer-events-none absolute right-0.5 bottom-[14px] h-[97px] w-[282px]" aria-hidden>
          <path fill="#4d4d4d" d="M40 2C14 4 0 20 0 39c0 20 12 32 22 42 6 9 15 14 28 14l20-6h212V2z" />
          <path fill="#eee" d="M11 82l5-1v3h-5zM98 89h4v2h-4zM142 89h3v2h-3zM158 89h3v2h-3zM176 88h10l3 3h-15z" />
          <path fill="none" stroke="#999" d="M11 88l2.500 2 2.500-2" />
        </svg>
      </div>
      <div className="flex w-1.5 shrink-0 flex-col">
        <span className="mt-[154px] h-[25px] bg-[#c0692c]" />
        <span className="mt-[203px] h-6 bg-[#777]" />
        <span className="flex-1 bg-[#484848]" />
        <span className="h-[60px] bg-[#2c4258]" />
      </div>
    </div>
  )
}
